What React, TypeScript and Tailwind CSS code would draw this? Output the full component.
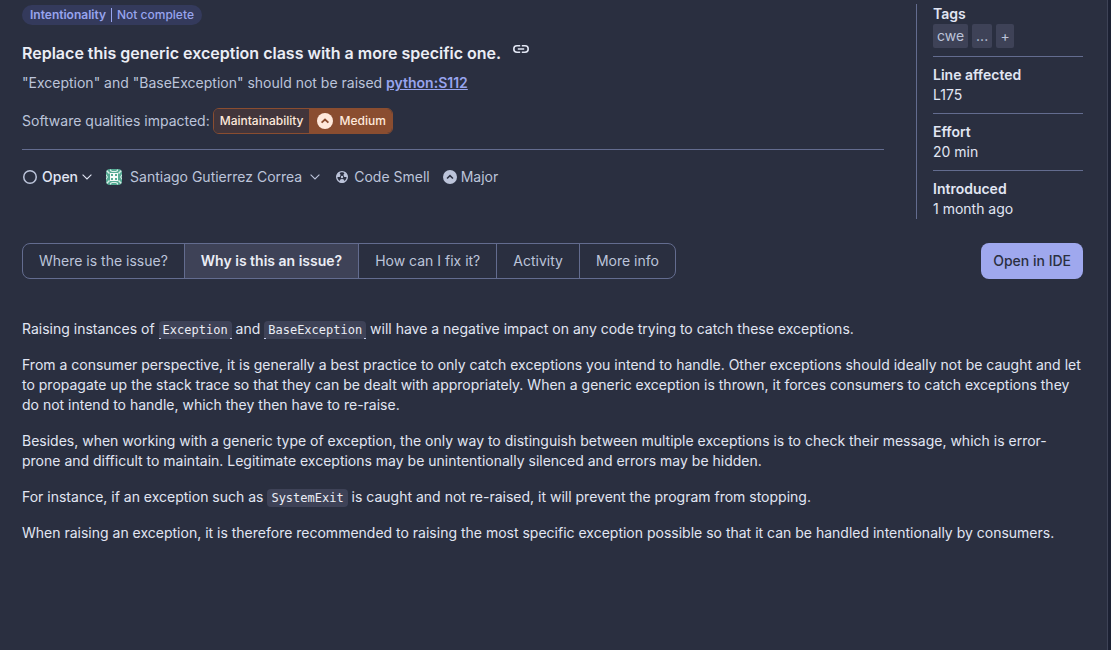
import React from 'react';

function Chevron() {
  return (
    <svg width="10" height="6" viewBox="0 0 10 6" fill="none" stroke="currentColor" strokeWidth="1.1" aria-hidden="true">
      <path d="M0.6 0.7 5 5 9.4 0.7" />
    </svg>
  );
}

function SeverityIcon({ size, mark }: { size: number; mark: string }) {
  return (
    <svg width={size} height={size} viewBox="0 0 16 16" fill="none" aria-hidden="true">
      <circle cx="8" cy="8" r="8" fill="currentColor" />
      <path d="M4.6 9.7 8 6.5l3.4 3.200" stroke={mark} strokeWidth="1.8" />
    </svg>
  );
}

function LinkIcon() {
  return (
    <svg width="16" height="8" viewBox="0 0 16 8" fill="none" stroke="currentColor" strokeWidth="1.6" aria-hidden="true">
      <path d="M7.2 0.8H4a3.2 3.2 0 0 0 0 6.4h3.2M8.8 0.8H12a3.2 3.2 0 0 1 0 6.4H8.8M4.8 4h6.4" />
    </svg>
  );
}

function CodeSmellIcon() {
  return (
    <svg width="12" height="12" viewBox="0 0 12 12" fill="none" aria-hidden="true">
      <circle cx="6" cy="6" r="5.3" stroke="currentColor" strokeWidth="1.4" />
      <path d="M6 6 2.9 1.2A5.7 5.7 0 0 0 .3 6zM6 6 9.1 1.2A5.7 5.7 0 0 1 11.7 6zM6 6 3 11a5.7 5.7 0 0 0 6 0z" fill="currentColor" />
      <circle cx="6" cy="6" r="2.2" fill="#2a2f40" />
      <circle cx="6" cy="6" r="1.2" fill="currentColor" />
      <path d="M4.4 1.6h3.2L6.8 3.4H5.2z" fill="#2a2f40" />
    </svg>
  );
}

function Avatar() {
  return (
    <svg width="16" height="16" viewBox="0 0 16 16" className="rounded-sm" aria-hidden="true">
      <rect width="16" height="16" fill="#55aa94" />
      <path d="M0 2l1-1 3 3-1 1zM16 2l-1-1-3 3 1 1zM0 14l1 1 3-3-1-1zM16 14l-1 1-3-3 1-1zM4 0l2 2h4l2-2v2l-2 1H6L4 2zM4 16l2-2h4l2 2v-2l-2-1H6l-2 1zM0 5l2 3-2 3V9l1-1-1-1zM16 5l-2 3 2 3V9l-1-1 1-1z" fill="#d9eee7" />
      <path d="M4 4h8v8H4z" fill="#f4faf8" />
      <path d="M5 5h2v2H5zM9 5h2v2H9zM5 9h2v2H5zM9 9h2v2H9z" fill="#55aa94" />
    </svg>
  );
}

function Code({ children, underlined = false }: { children: string; underlined?: boolean }) {
  return (
    <code
      className={
        'bg-[#3e4257] px-1 py-0.5 font-["DejaVu_Sans_Mono",monospace] text-xs text-[#ebedf5] ' +
        (underlined
          ? 'rounded-t-sm bg-[linear-gradient(to_right,#c5cdeb_2px,transparent_2px,transparent_calc(100%-2px),#c5cdeb_calc(100%-2px))] bg-[length:100%_1px] bg-bottom bg-no-repeat'
          : 'rounded-sm')
      }
    >
      {children}
    </code>
  );
}

const details = [
  { label: 'Line affected', value: 'L175' },
  { label: 'Effort', value: '20 min' },
  { label: 'Introduced', value: '1 month ago' },
];

const tabs = ['Where is the issue?', 'Why is this an issue?', 'How can I fix it?', 'Activity', 'More info'];

export default function App() {
  const [active, setActive] = React.useState(1);

  return (
    <div className="flex min-h-screen bg-[#1c2133] font-[Inter,sans-serif] text-sm text-[#e1e6f3]">
      <main className="mr-[3px] min-w-0 flex-1 border-r border-[#3e4357] bg-[#2a2f40] pt-1 pr-6 pb-8 pl-[22px]">
        <div className="flex gap-8">
          <header className="min-w-0 flex-1">
            <div className="mt-px flex h-5 w-fit items-center rounded-full bg-[#343a5c] px-2 text-xs text-[#98a4ee]">
              <span className="font-semibold">Intentionality</span>
              <span className="mx-[5px] h-3.5 w-px bg-[#98a4ee]" />
              <span className="font-medium">Not complete</span>
            </div>

            <div className="mt-4 flex gap-3">
              <h1 className="text-base font-semibold text-[#ebedf5]">
                Replace this generic exception class with a more specific one.
              </h1>
              <button type="button" aria-label="Copy link" className="mb-2 flex items-center text-[#e1e6f3]">
                <LinkIcon />
              </button>
            </div>

            <p className="mt-2 text-[#bcc4da]">
              "Exception" and "BaseException" should not be raised{' '}
              <a href="#rule" className="font-semibold text-[#98a4ee] underline">python:S112</a>
            </p>

            <div className="mt-[15px] flex items-center gap-[3px] border-b border-[#636c8f] pb-[15px] text-[#bcc4da]">
              <span>Software qualities impacted:</span>
              <div className="flex h-[26px] overflow-hidden rounded-md border border-[#8a4d30] text-xs font-medium text-[#ffe9dc]">
                <span className="flex items-center bg-[#42353b] px-1.5">Maintainability</span>
                <span className="flex items-center gap-1.5 bg-[#8a4d30] pr-1.5 pl-2">
                  <SeverityIcon size={16} mark="#8a4d30" />
                  Medium
                </span>
              </div>
            </div>

            <div className="mt-[17px] flex items-center text-[#bcc4da]">
              <button type="button" className="flex items-center gap-1 font-medium text-[#e1e6f3]">
                <svg width="16" height="16" viewBox="0 0 16 16" fill="none" stroke="#bcc4da" strokeWidth="1.5" aria-hidden="true">
                  <circle cx="8" cy="8" r="6.250" />
                </svg>
                Open
                <Chevron />
              </button>
              <button type="button" className="ml-3.5 flex items-center gap-2">
                <Avatar />
                <span>Santiago Gutierrez Correa</span>
                <Chevron />
              </button>
              <span className="ml-4 flex items-center gap-1.5">
                <CodeSmellIcon />
                Code Smell
              </span>
              <span className="ml-[13px] flex items-center gap-1">
                <SeverityIcon size={14} mark="#2a2f40" />
                Major
              </span>
            </div>
          </header>

          <aside className="w-[167px] border-l border-[#636c8f] pl-4">
            <h2 className="font-semibold">Tags</h2>
            <div className="flex gap-1 border-b border-[#636c8f] pb-2 text-[#bcc4da]">
              <span className="flex h-6 items-center rounded-xs bg-[#3e4257] px-1">cwe</span>
              <button type="button" className="h-6 w-5 rounded-xs bg-[#3e4257]">...</button>
              <button type="button" aria-label="Add tag" className="h-6 w-[18px] rounded-xs bg-[#3e4257]">+</button>
            </div>
            <dl>
              {details.map((d) => (
                <div key={d.label} className="border-b border-[#636c8f] py-2 last:border-b-0 last:pb-0">
                  <dt className="font-semibold">{d.label}</dt>
                  <dd>{d.value}</dd>
                </div>
              ))}
            </dl>
          </aside>
        </div>

        <div className="mt-6 flex items-center justify-between">
          <div role="tablist" className="flex h-9 divide-x divide-[#636c8f] overflow-hidden rounded-lg border border-[#636c8f]">
            {tabs.map((tab, i) => (
              <button
                key={tab}
                type="button"
                role="tab"
                aria-selected={i === active}
                onClick={() => setActive(i)}
                className={i === active ? 'bg-[#3e4257] px-4 font-semibold text-[#ebedf5]' : 'px-4 text-[#bcc4da]'}
              >
                {tab}
              </button>
            ))}
          </div>
          <button type="button" className="h-9 rounded-lg bg-[#9fa8ee] px-3 font-medium text-[#2a2f40]">Open in IDE</button>
        </div>

        <article className="mt-10 space-y-4">
          <p>
            Raising instances of <Code underlined>Exception</Code> and <Code underlined>BaseException</Code> will have a
            negative impact on any code trying to catch these exceptions.
          </p>
          <p>
            From a consumer perspective, it is generally a best practice to only catch exceptions you intend to handle.
            Other exceptions should ideally not be caught and let to propagate up the stack trace so that they can be
            dealt with appropriately. When a generic exception is thrown, it forces consumers to catch exceptions they do
            not intend to handle, which they then have to re-raise.
          </p>
          <p>
            Besides, when working with a generic type of exception, the only way to distinguish between multiple
            exceptions is to check their message, which is error-prone and difficult to maintain. Legitimate exceptions
            may be unintentionally silenced and errors may be hidden.
          </p>
          <p>
            For instance, if an exception such as <Code>SystemExit</Code> is caught and not re-raised, it will prevent the
            program from stopping.
          </p>
          <p>
            When raising an exception, it is therefore recommended to raising the most specific exception possible so that
            it can be handled intentionally by consumers.
          </p>
        </article>
      </main>
    </div>
  );
}
